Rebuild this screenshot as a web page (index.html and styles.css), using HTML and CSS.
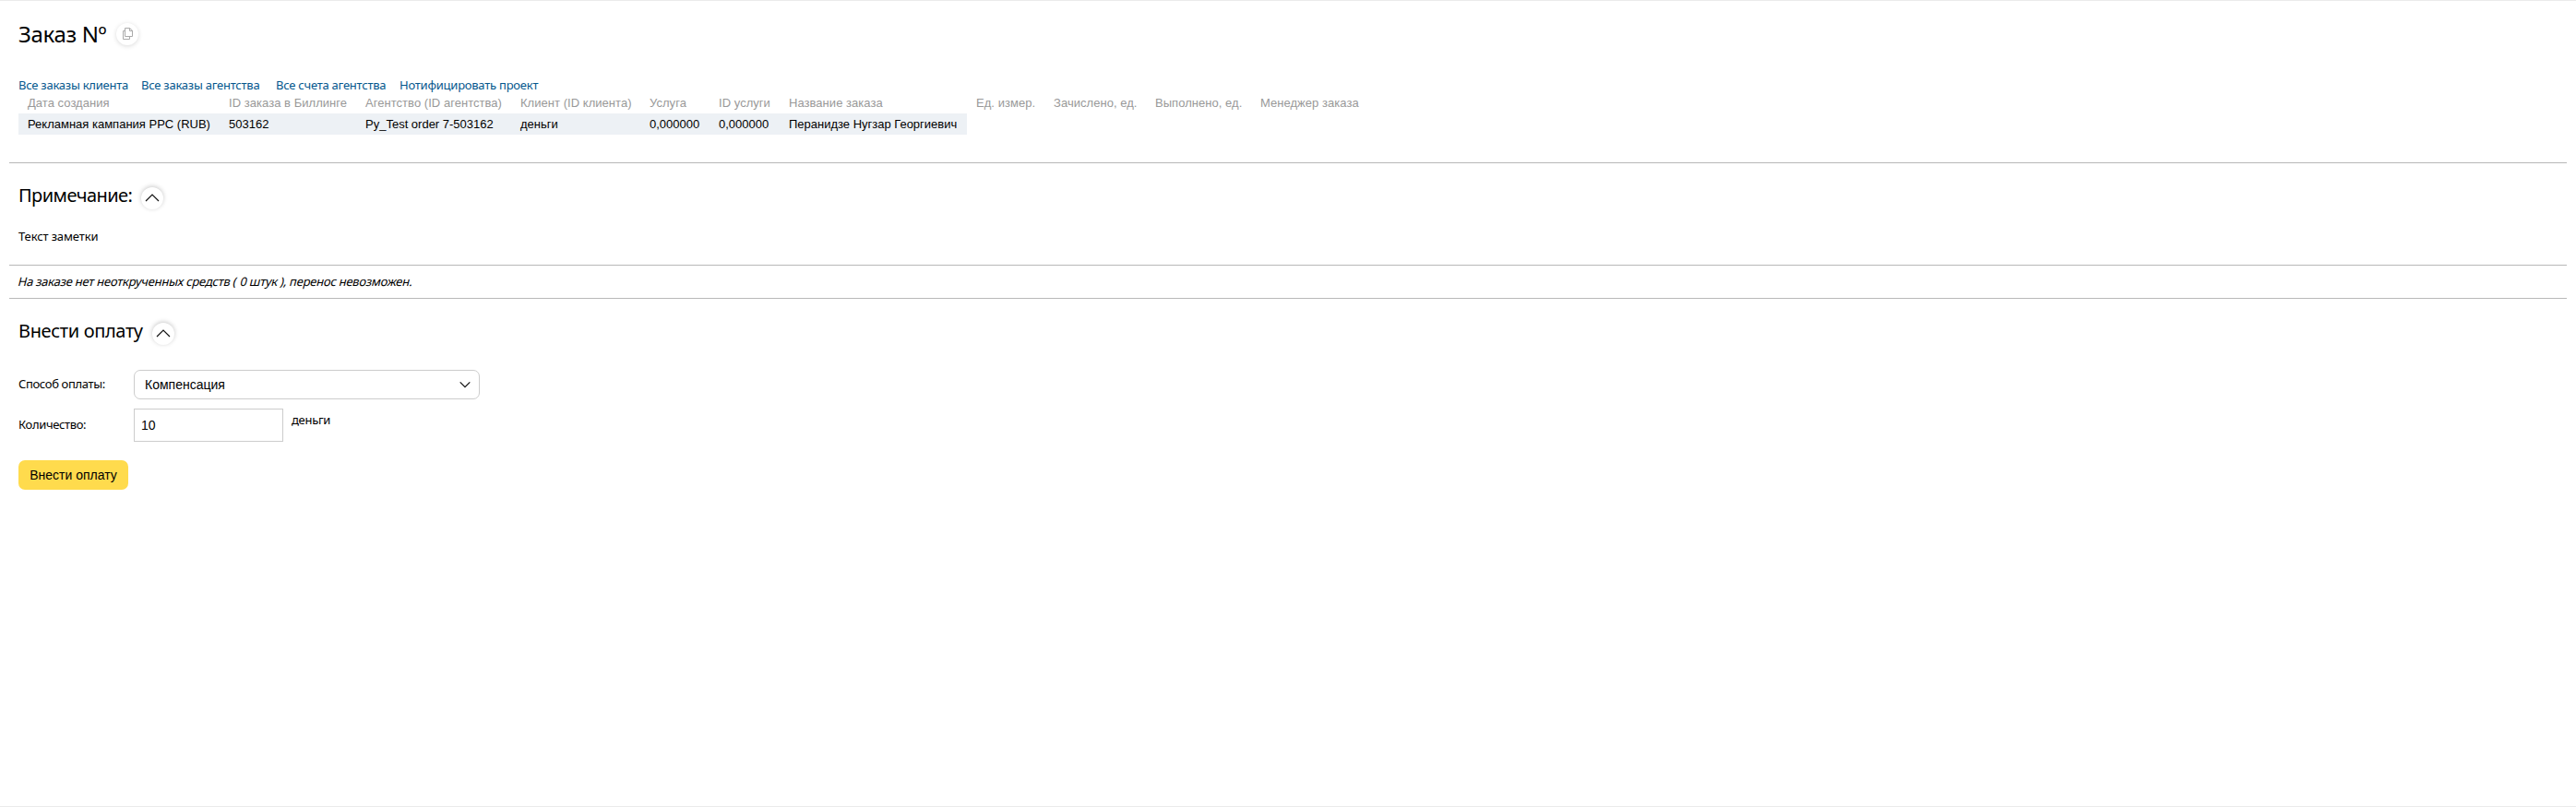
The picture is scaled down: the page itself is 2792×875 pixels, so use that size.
FILE: index.html
```html
<!DOCTYPE html>
<html lang="ru">
<head>
<meta charset="utf-8">
<title>Заказ</title>
<link rel="stylesheet" href="styles.css">
</head>
<body>
<main class="page">
  <header class="order-head">
    <h1 class="title">Заказ Nº</h1>
    <button class="round copy" aria-label="Копировать"><svg width="14" height="14" viewBox="0 0 14 14"><path d="M4.500.5h5l3 2.500v6.500h-8zM9.500.5v3h3M4.500 3.500h-2v9h7v-3"/></svg></button>
  </header>
  <nav class="links">
    <a class="link l1">Все заказы клиента</a>
    <a class="link l2">Все заказы агентства</a>
    <a class="link l3">Все счета агентства</a>
    <a class="link">Нотифицировать проект</a>
  </nav>
  <table class="orders">
    <colgroup><col class="c1"><col class="c2"><col class="c3"><col class="c4"><col class="c5"><col class="c6"><col class="c7"><col class="c8"><col class="c9"><col class="c10"><col class="c11"></colgroup>
    <thead><tr><th>Дата создания</th><th>ID заказа в Биллинге</th><th>Агентство (ID агентства)</th><th>Клиент (ID клиента)</th><th>Услуга</th><th>ID услуги</th><th>Название заказа</th><th>Ед. измер.</th><th>Зачислено, ед.</th><th>Выполнено, ед.</th><th>Менеджер заказа</th></tr></thead>
    <tbody><tr><td>Рекламная кампания PPC (RUB)</td><td>503162</td><td>Py_Test order 7-503162</td><td>деньги</td><td>0,000000</td><td>0,000000</td><td>Перанидзе Нугзар Георгиевич</td></tr></tbody>
  </table>
  <section class="note">
    <div class="section-head">
      <h2 class="subtitle s1">Примечание:</h2>
      <button class="round" aria-label="Свернуть"><svg width="16" height="16" viewBox="0 0 16 16"><path d="M1 11l7-7 7 7"/></svg></button>
    </div>
    <p class="note-text">Текст заметки</p>
  </section>
  <section class="transfer"><span class="slanted">На заказе нет неоткрученных средств ( <span class="count">0</span> штук ), перенос невозможен.</span></section>
  <section class="payment">
    <div class="section-head">
      <h2 class="subtitle s2">Внести оплату</h2>
      <button class="round" aria-label="Свернуть"><svg width="16" height="16" viewBox="0 0 16 16"><path d="M1 11l7-7 7 7"/></svg></button>
    </div>
    <div class="row">
      <span class="label">Способ оплаты:</span>
      <button class="select"><span class="value">Компенсация</span><svg width="12" height="12" viewBox="0 0 12 12"><path d="M.7 3.300L6 8.600l5.300-5.300"/></svg></button>
    </div>
    <div class="row amount">
      <label class="label" for="qty">Количество:</label>
      <input class="qty" id="qty" value="10">
      <span class="unit">деньги</span>
    </div>
    <button class="submit"><span class="submit-text">Внести оплату</span></button>
  </section>
</main>
</body>
</html>
```
FILE: styles.css
```css
* { box-sizing: border-box; }
body { margin: 0; background: #fff; color: #000; font: 13px/18px "Noto Sans", sans-serif; }
button { margin: 0; border: 0; padding: 0; background: #fff; color: #000; }
svg { display: block; fill: none; stroke: #111; stroke-width: 1.2; }
.page { height: 875px; padding: 24px 10px 0; border-top: 1px solid #ebebeb; border-bottom: 1px solid #ebebeb; }
.order-head { display: flex; height: 58px; padding-left: 10px; }
.title { width: 106px; margin: -4px 0 0; font-size: 24px; line-height: 32px; font-weight: 400; letter-spacing: -.35px; white-space: nowrap; }
.round { display: flex; align-items: center; justify-content: center; flex: none; width: 24px; height: 24px; border-radius: 50%; box-shadow: 0 -1px 5px rgba(0,0,0,.22); }
.copy { box-shadow: 0 1px 5px rgba(0,0,0,.15); }
.copy svg { stroke: #aaa; stroke-width: 1; }
.links { display: flex; height: 21px; padding-left: 10px; letter-spacing: -.24px; white-space: nowrap; }
.link { color: #04578d; }
.l1 { width: 133px; }
.l2 { width: 146px; }
.l3 { width: 134px; }
.orders { width: 1462px; margin-left: 10px; table-layout: fixed; border-collapse: collapse; font: 13px/15px "Liberation Sans", Arial, sans-serif; white-space: nowrap; }
.orders th { height: 19px; padding: 0 0 4px 10px; font-weight: 400; text-align: left; color: #999; letter-spacing: .04px; }
.orders td { height: 23px; padding: 0 0 0 10px; background: #edf1f5; }
.c1 { width: 218px; }
.c2 { width: 148px; }
.c3 { width: 168px; }
.c4 { width: 140px; }
.c5 { width: 75px; }
.c6 { width: 76px; }
.c7 { width: 203px; }
.c8 { width: 84px; }
.c9 { width: 110px; }
.c10 { width: 114px; }
.c11 { width: 126px; }
.note { height: 111px; margin-top: 30px; padding: 26px 10px 0; border-top: 1px solid #b8b8b8; }
.section-head { display: flex; height: 44px; }
.subtitle { margin: -5px 0 0; font-size: 20px; line-height: 28px; font-weight: 400; white-space: nowrap; }
.s1 { width: 133px; letter-spacing: -.55px; }
.s2 { width: 145px; letter-spacing: -.35px; }
.note-text { margin: 0; letter-spacing: -.12px; }
.transfer { height: 37px; padding: 8px 10px 0; border-top: 1px solid #b8b8b8; border-bottom: 1px solid #b8b8b8; }
.slanted { display: inline-block; transform: skewX(-14deg); letter-spacing: -.25px; white-space: nowrap; }
.count { margin-left: 1px; }
.payment { padding: 26px 10px 0; }
.payment .section-head { height: 51px; }
.row { display: flex; align-items: center; height: 32px; }
.label { width: 125px; margin-top: -2px; letter-spacing: -.35px; }
.select { display: flex; align-items: center; justify-content: space-between; width: 375px; height: 32px; padding: 0 9px 0 11px; border: 1px solid #ccc; border-radius: 7px; font: 14px/16px "Liberation Sans", Arial, sans-serif; }
.amount { height: 36px; margin-top: 10px; }
.qty { width: 162px; height: 36px; margin: 0; padding: 0 7px; border: 1px solid #ccc; font: 14px/16px "Liberation Sans", Arial, sans-serif; }
.unit { margin: -12px 0 0 9px; letter-spacing: -.3px; }
.submit { width: 119px; height: 32px; margin-top: 20px; border-radius: 7px; background: #ffdb4d; font: 14px/16px "Liberation Sans", Arial, sans-serif; }
```
